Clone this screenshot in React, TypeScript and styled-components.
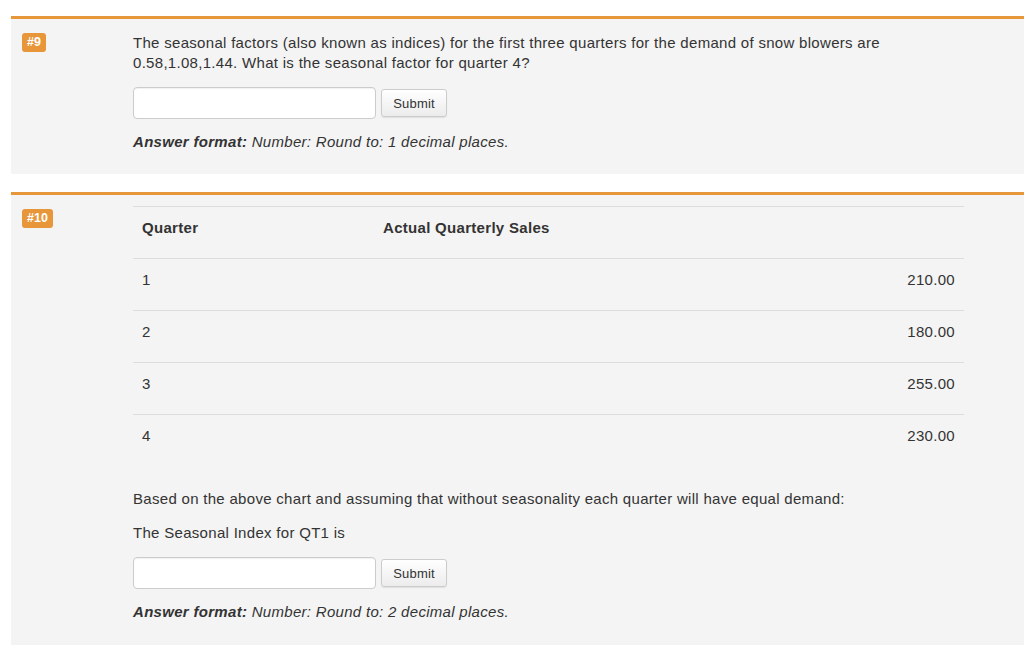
import React from 'react';
import styled, { createGlobalStyle } from 'styled-components';

const GlobalStyle = createGlobalStyle`
  body {
    margin: 0;
    background: #ffffff;
    font-family: 'Liberation Sans', Arial, sans-serif;
    color: #333333;
  }
`;

const Page = styled.div`
  padding: 16px 0 0 11px;
  display: flex;
  flex-direction: column;
  gap: 18px;
`;

const Panel = styled.section`
  border-top: 3px solid #e8963a;
  background: #f4f4f4;
  display: grid;
  grid-template-columns: 111px 1fr;
  align-items: start;
  padding: 11px 60px 0 11px;
`;

const Badge = styled.span`
  justify-self: start;
  margin-top: 3px;
  background: #e8963a;
  color: #ffffff;
  font-size: 12.5px;
  font-weight: 700;
  line-height: 19px;
  padding: 0 5px;
  border-radius: 3px;
`;

const Content = styled.div<{ $top: number; $bottom: number }>`
  padding-top: ${p => p.$top}px;
  padding-bottom: ${p => p.$bottom}px;
  font-size: 15px;
  letter-spacing: 0.3px;
  line-height: 20px;
`;

const Text = styled.p`
  margin: 0 0 14px;
`;

const AnswerRow = styled.div`
  display: flex;
  align-items: center;
  gap: 5px;
  margin-bottom: 13px;
`;

const AnswerInput = styled.input`
  box-sizing: border-box;
  width: 243px;
  height: 32px;
  border: 1px solid #cccccc;
  border-radius: 4px;
  background: #ffffff;
  box-shadow: inset 0 1px 1px rgba(0, 0, 0, 0.06);
`;

const SubmitButton = styled.button`
  box-sizing: border-box;
  width: 66px;
  height: 28px;
  border: 1px solid #cccccc;
  border-radius: 3px;
  background: linear-gradient(#ffffff, #ececec);
  box-shadow: 0 1px 1px rgba(0, 0, 0, 0.08);
  font-family: 'Liberation Sans', Arial, sans-serif;
  font-size: 13px;
  letter-spacing: 0.2px;
  color: #333333;
`;

const Format = styled.div`
  font-style: italic;
  b {
    font-weight: 700;
  }
`;

const Table = styled.table`
  width: 100%;
  border-collapse: collapse;
  margin-bottom: 23px;
`;

const Cell = styled.td<{ $right?: boolean; $head?: boolean }>`
  border-top: 1px solid #dddddd;
  padding: 11px 9px 20px;
  text-align: ${p => (p.$right ? 'right' : 'left')};
  font-weight: ${p => (p.$head ? 700 : 400)};
  vertical-align: top;
  &:first-child {
    width: 223px;
  }
`;

const rows = [
  ['1', '210.00'],
  ['2', '180.00'],
  ['3', '255.00'],
  ['4', '230.00'],
];

const App = () => (
  <>
    <GlobalStyle />
    <Page>
      <Panel>
        <Badge>#9</Badge>
        <Content $top={3} $bottom={22}>
          <Text>
            The seasonal factors (also known as indices) for the first three quarters for the demand of snow blowers are
            0.58,1.08,1.44. What is the seasonal factor for quarter 4?
          </Text>
          <AnswerRow>
            <AnswerInput />
            <SubmitButton>Submit</SubmitButton>
          </AnswerRow>
          <Format>
            <b>Answer format:</b> Number: Round to: 1 decimal places.
          </Format>
        </Content>
      </Panel>
      <Panel>
        <Badge>#10</Badge>
        <Content $top={0} $bottom={23}>
          <Table>
            <tbody>
              <tr>
                <Cell as="th" $head>Quarter</Cell>
                <Cell as="th" $head>Actual Quarterly Sales</Cell>
              </tr>
              {rows.map(([q, v]) => (
                <tr key={q}>
                  <Cell>{q}</Cell>
                  <Cell $right>{v}</Cell>
                </tr>
              ))}
            </tbody>
          </Table>
          <Text>Based on the above chart and assuming that without seasonality each quarter will have equal demand:</Text>
          <Text>The Seasonal Index for QT1 is</Text>
          <AnswerRow>
            <AnswerInput />
            <SubmitButton>Submit</SubmitButton>
          </AnswerRow>
          <Format>
            <b>Answer format:</b> Number: Round to: 2 decimal places.
          </Format>
        </Content>
      </Panel>
    </Page>
  </>
);

export default App;
